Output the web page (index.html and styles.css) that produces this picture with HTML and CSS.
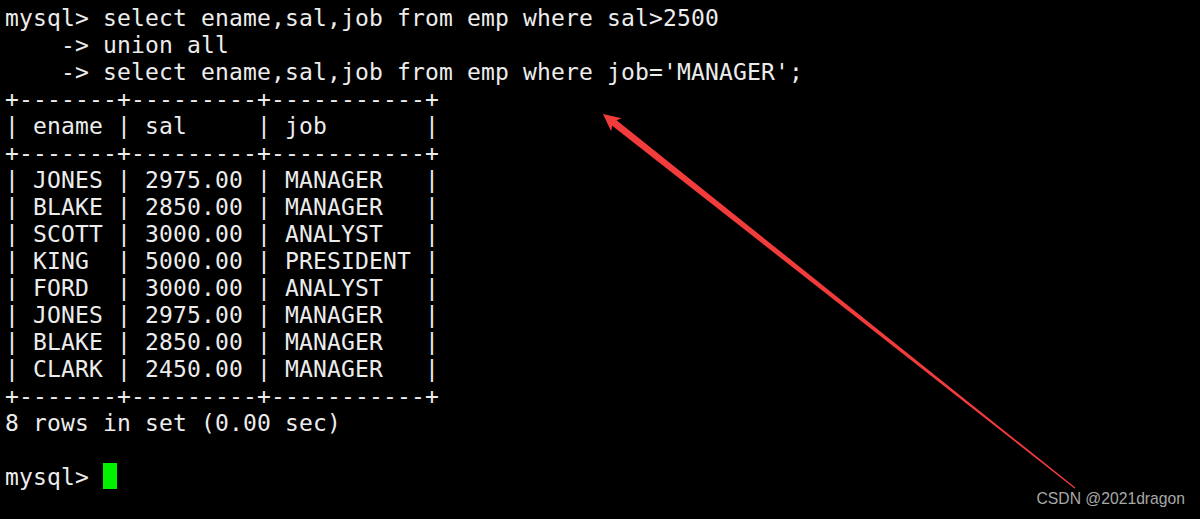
FILE: index.html
```html
<!DOCTYPE html>
<html lang="en">
<head>
<meta charset="utf-8">
<title>mysql union all</title>
<link rel="stylesheet" href="styles.css">
</head>
<body>
<main class="screen">
<pre class="term">mysql&gt; select ename,sal,job from emp where sal&gt;2500
    -&gt; union all
    -&gt; select ename,sal,job from emp where job='MANAGER';
+-------+---------+-----------+
| ename | sal     | job       |
+-------+---------+-----------+
| JONES | 2975.00 | MANAGER   |
| BLAKE | 2850.00 | MANAGER   |
| SCOTT | 3000.00 | ANALYST   |
| KING  | 5000.00 | PRESIDENT |
| FORD  | 3000.00 | ANALYST   |
| JONES | 2975.00 | MANAGER   |
| BLAKE | 2850.00 | MANAGER   |
| CLARK | 2450.00 | MANAGER   |
+-------+---------+-----------+
8 rows in set (0.00 sec)

mysql&gt; <span class="cursor"></span></pre>
<svg class="arrow" width="1200" height="519" viewBox="0 0 1200 519" aria-hidden="true">
  <polygon points="603,114 621.5,118.2 616.6,120.2 1075.3,487.6 1074.5,488.4 612.2,125.8 611.2,131.2" fill="#f23b3b"/>
</svg>
<div class="mark">CSDN @2021dragon</div>
</main>
</body>
</html>
```

FILE: styles.css
```css
html, body {
  margin: 0;
  padding: 0;
  background: #000;
  overflow: hidden;
}

.screen {
  position: relative;
  width: 1200px;
  height: 519px;
  background: #000;
}

.term {
  margin: 0;
  padding: 5px 0 0 5px;
  font-family: "DejaVu Sans Mono", monospace;
  font-size: 23px;
  letter-spacing: 0.155px;
  line-height: 27px;
  color: #ececec;
  white-space: pre;
}

.cursor {
  display: inline-block;
  width: 14px;
  height: 26px;
  background: #00f000;
  vertical-align: top;
  margin-top: -1px;
}

.arrow {
  position: absolute;
  left: 0;
  top: 0;
  pointer-events: none;
}

.mark {
  position: absolute;
  right: 15px;
  bottom: 11px;
  font-family: "Liberation Sans", Arial, sans-serif;
  font-size: 15.7px;
  line-height: 18px;
  color: #a8a8a8;
}
```
